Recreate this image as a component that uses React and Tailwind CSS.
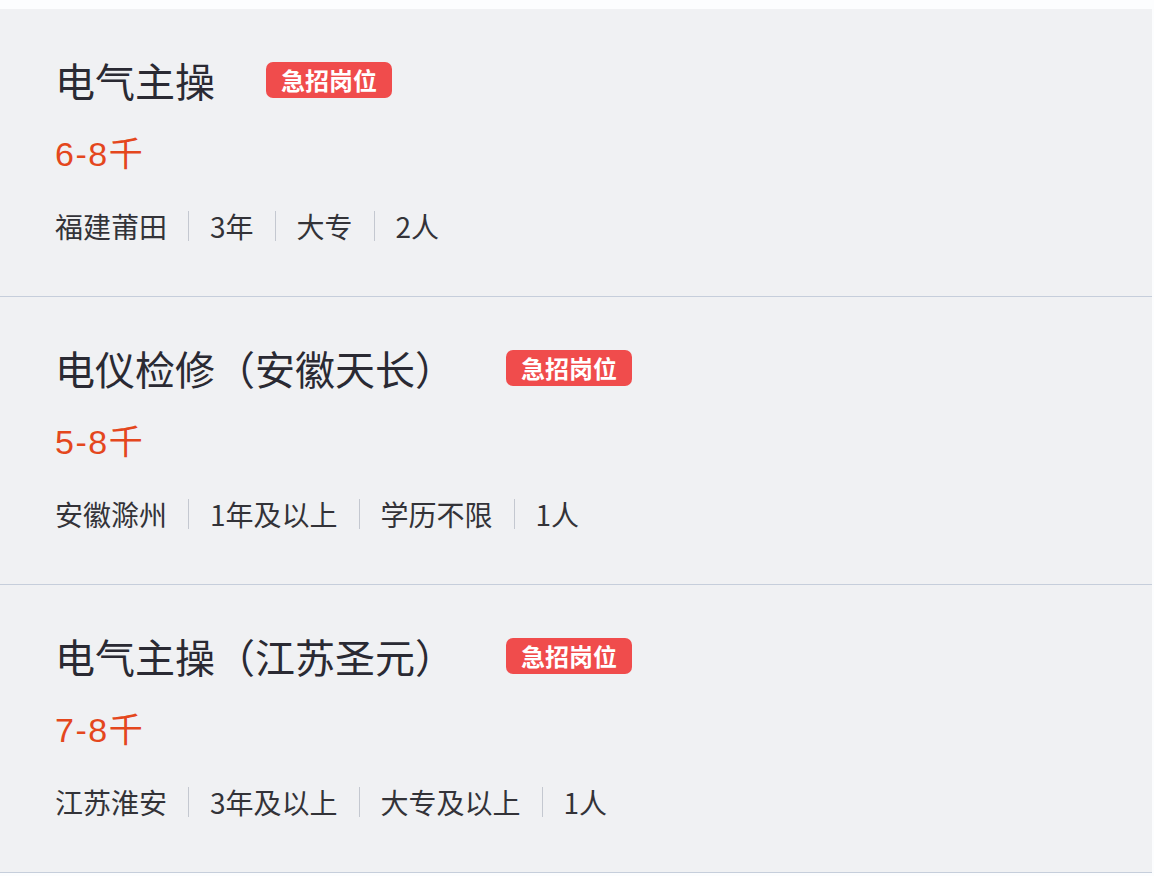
import React from 'react';

const jobs = [
    { title: '电气主操', salary: '6-8千', tags: ['福建莆田', '3年', '大专', '2人'] },
    { title: '电仪检修（安徽天长）', salary: '5-8千', tags: ['安徽滁州', '1年及以上', '学历不限', '1人'] },
    { title: '电气主操（江苏圣元）', salary: '7-8千', tags: ['江苏淮安', '3年及以上', '大专及以上', '1人'] },
];

const JobCard = ({ job }) => (
    <div className="h-[288px] bg-[#f0f1f3] border-b border-[#c6cedb] pl-[55px] pt-[51px]">
        {/* title + urgent badge */}
        <div className="flex items-center h-[40px]">
            <span className="text-[40px] leading-[40px] text-[#2a2a33]">{job.title}</span>
            <span className="ml-[51px] h-[36px] px-[15px] rounded-[7px] bg-[#f04c4c] text-white text-[24px] font-bold leading-[36px]">
                急招岗位
            </span>
        </div>

        <div
            className="mt-[34px] h-[40px] text-[34px] leading-[40px] tracking-[1.5px] text-[#e4471d]"
            style={{ fontFamily: '"Liberation Sans", "Noto Sans CJK SC", sans-serif' }}
        >
            {job.salary}
        </div>

        <div className="mt-[37px] flex items-center h-[30px]">
            {job.tags.map((tag, i) => (
                <React.Fragment key={tag}>
                    {i > 0 && <div className="mx-[21px] w-px h-[30px] bg-[#c4c8d0]"></div>}
                    <span className="text-[28px] leading-[30px] text-[#333338]">{tag}</span>
                </React.Fragment>
            ))}
        </div>
    </div>
);

const App = () => {
    return (
        <div
            className="w-[1154px] h-[876px] bg-[#fcfdfe] pt-[9px] pr-[2px] overflow-hidden"
            style={{ fontFamily: '"Noto Sans CJK SC", "Noto Sans", sans-serif' }}
        >
            {jobs.map((job) => (
                <JobCard key={job.title} job={job} />
            ))}
        </div>
    );
};

export default App;
